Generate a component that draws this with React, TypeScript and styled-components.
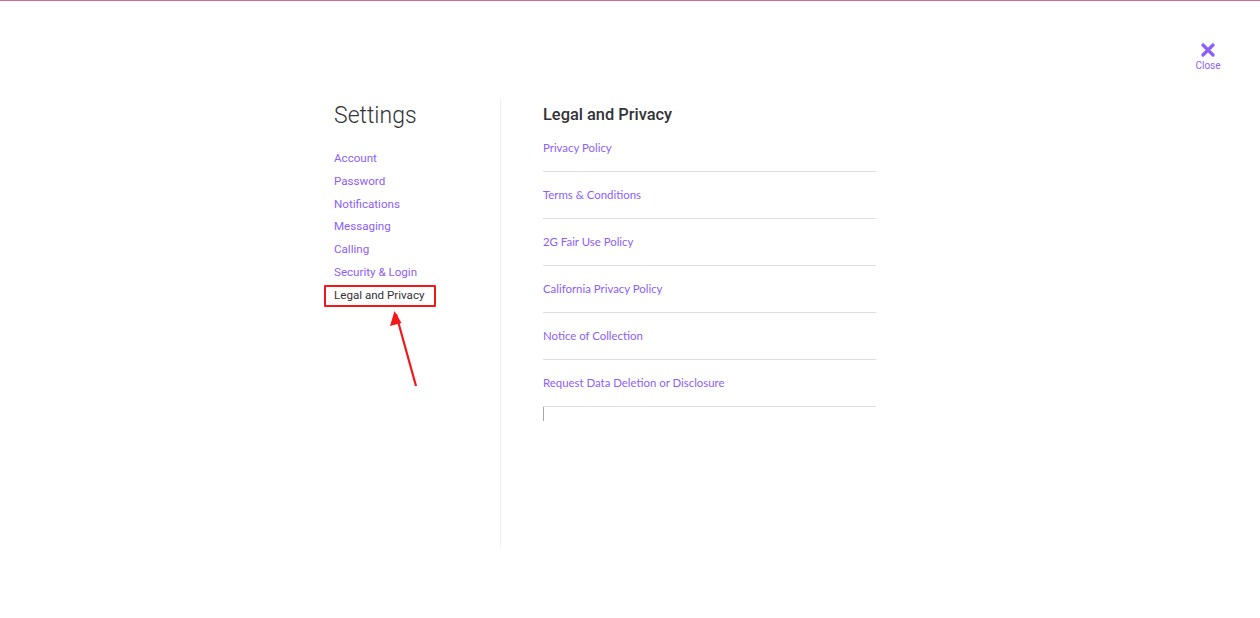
import React from 'react';
import styled, { createGlobalStyle } from 'styled-components';

const purple = '#8d5ef8';
const ink = '#333338';

const GlobalStyle = createGlobalStyle`
    html, body {
        margin: 0;
        padding: 0;
        background: #fff;
    }
    body {
        font-family: Roboto, "Liberation Sans", sans-serif;
        border-top: 1px solid #cf6f98;
    }
`;

const TopBar = styled.header`
    height: 97px;
    display: flex;
    justify-content: flex-end;
    align-items: flex-start;
    padding-right: 35px;
`;

const CloseButton = styled.button`
    margin-top: 42px;
    border: 0;
    background: none;
    padding: 0;
    width: 34px;
    display: flex;
    flex-direction: column;
    align-items: center;
    gap: 3px;
    color: ${purple};
    font-family: Roboto, sans-serif;
    font-size: 10px;
    cursor: pointer;
`;

const Layout = styled.main`
    width: 592px;
    height: 450px;
    margin: 0 auto;
    display: flex;
`;

const Sidebar = styled.aside`
    width: 166px;
    border-right: 1px solid #f1f1f1;
`;

const Title = styled.h1`
    margin: 0;
    padding-top: 2px;
    font-size: 23px;
    line-height: 32px;
    font-weight: 300;
    color: ${ink};
`;

const NavList = styled.nav`
    margin-top: 15px;
    display: flex;
    flex-direction: column;
`;

const NavItem = styled.a<{ $active?: boolean }>`
    position: relative;
    align-self: flex-start;
    font-size: 11.6px;
    line-height: 22.75px;
    color: ${p => (p.$active ? ink : purple)};
    text-decoration: none;
    cursor: pointer;

    ${p =>
        p.$active &&
        `
        &::after {
            content: '';
            position: absolute;
            left: -10px;
            right: -12px;
            top: 1px;
            bottom: -1px;
            border: 2px solid #f01818;
            border-radius: 1px;
        }
    `}
`;

const Arrow = styled.svg`
    position: absolute;
    left: 48px;
    top: 30px;
    overflow: visible;
`;

const Content = styled.section`
    flex: 1;
    padding: 7px 50px 0 42px;
`;

const Heading = styled.h2`
    margin: 0;
    font-size: 16.4px;
    line-height: 20px;
    font-weight: 500;
    color: ${ink};
`;

const LinkRow = styled.a`
    display: block;
    padding: 15px 0;
    line-height: 16px;
    border-bottom: 1px solid #dedede;
    font-family: Lato, "Open Sans", sans-serif;
    font-size: 11.4px;
    color: ${purple};
    text-decoration: none;
    cursor: pointer;
`;

const Frame = styled.div`
    height: 14px;
    border-left: 1px solid #a8a8a8;
`;

const navItems = [
    'Account',
    'Password',
    'Notifications',
    'Messaging',
    'Calling',
    'Security & Login',
    'Legal and Privacy',
];

const legalLinks = [
    'Privacy Policy',
    'Terms & Conditions',
    '2G Fair Use Policy',
    'California Privacy Policy',
    'Notice of Collection',
    'Request Data Deletion or Disclosure',
];

export default function App() {
    return (
        <>
            <GlobalStyle />
            <TopBar>
                <CloseButton>
                    <svg width="14" height="14" viewBox="0 0 14 14">
                        <path d="M2 2 L12 12 M12 2 L2 12" stroke={purple} strokeWidth="3.2" strokeLinecap="round" />
                    </svg>
                    Close
                </CloseButton>
            </TopBar>
            <Layout>
                <Sidebar>
                    <Title>Settings</Title>
                    <NavList>
                        {navItems.map(item => {
                            const active = item === 'Legal and Privacy';
                            return (
                                <NavItem key={item} $active={active}>
                                    {item}
                                    {active && (
                                        <Arrow width="40" height="80">
                                            <path d="M34 72 L14 0" stroke="#f01818" strokeWidth="2.2" fill="none" />
                                            <path d="M12.5 -3 L8 12 L19.5 9 Z" fill="#f01818" />
                                        </Arrow>
                                    )}
                                </NavItem>
                            );
                        })}
                    </NavList>
                </Sidebar>
                <Content>
                    <Heading>Legal and Privacy</Heading>
                    {legalLinks.map(link => (
                        <LinkRow key={link}>{link}</LinkRow>
                    ))}
                    <Frame />
                </Content>
            </Layout>
        </>
    );
}
